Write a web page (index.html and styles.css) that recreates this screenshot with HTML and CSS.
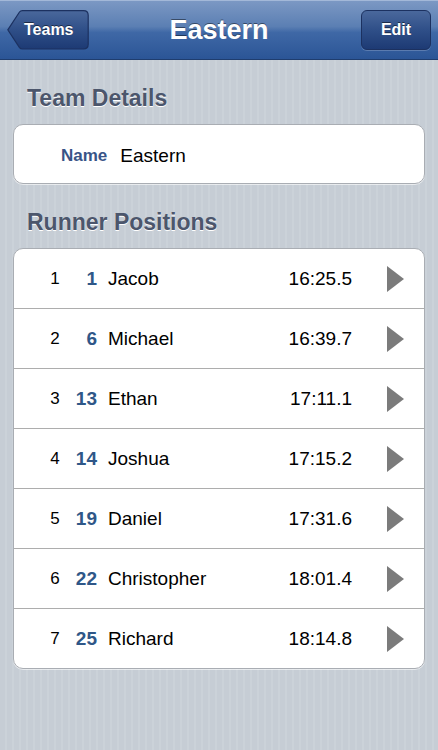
FILE: index.html
```html
<!DOCTYPE html>
<html lang="en">
<head>
  <meta charset="UTF-8">
  <title>Eastern</title>
  <meta name="viewport" content="width=device-width, initial-scale=1.0">
  <link rel="stylesheet" href="styles.css">
</head>
<body>

  <div class="navbar">
    <button class="btn-back">
      <svg class="btn-back-bg" width="82" height="40" viewBox="0 0 82 40">
        <defs>
          <linearGradient id="backGrad" x1="0" y1="0" x2="0" y2="1">
            <stop offset="0" stop-color="#4a689c"/>
            <stop offset="0.5" stop-color="#2f4f88"/>
            <stop offset="1" stop-color="#1d3a74"/>
          </linearGradient>
        </defs>
        <path d="M0.8,19.8 L12.5,2 Q13.5,0.6 15.5,0.6 H76.5 Q81.2,0.6 81.2,5.3 V34.3 Q81.2,39 76.5,39 H15.5 Q13.5,39 12.5,37.6 Z"
              fill="url(#backGrad)" stroke="#1c3160" stroke-width="1.2"/>
      </svg>
      <span>Teams</span>
    </button>
    <h1>Eastern</h1>
    <button class="btn-edit">Edit</button>
  </div>

  <h2 class="section-title">Team Details</h2>
  <div class="group">
    <div class="row row-detail">
      <span class="label">Name</span>
      <span class="value">Eastern</span>
    </div>
  </div>

  <h2 class="section-title">Runner Positions</h2>
  <div class="group" id="runners"></div>

  <script>
    const runners = [
      [1, 1, "Jacob", "16:25.5"],
      [2, 6, "Michael", "16:39.7"],
      [3, 13, "Ethan", "17:11.1"],
      [4, 14, "Joshua", "17:15.2"],
      [5, 19, "Daniel", "17:31.6"],
      [6, 22, "Christopher", "18:01.4"],
      [7, 25, "Richard", "18:14.8"]
    ];
    const lista = document.getElementById("runners");

    runners.forEach(r => {
      const div = document.createElement("div");
      div.className = "row";
      div.innerHTML = `
        <span class="pos">${r[0]}</span>
        <span class="bib">${r[1]}</span>
        <span class="name">${r[2]}</span>
        <span class="time">${r[3]}</span>
        <svg class="chevron" width="17" height="26" viewBox="0 0 17 26">
          <polygon points="0,0 17,13 0,26" fill="#7b7b7b"/>
        </svg>
      `;
      lista.appendChild(div);
    });
  </script>

</body>
</html>
```

FILE: styles.css
```css
body {
  margin: 0;
  padding: 0 0 40px;
  font-family: "Liberation Sans", Arial, sans-serif;
  background-color: #c8cfd7;
  background-image: repeating-linear-gradient(90deg, #c6cdd5 0, #c6cdd5 5px, #cbd2d9 5px, #cbd2d9 7px);
  min-height: 750px;
  box-sizing: border-box;
}

.navbar {
  height: 59px;
  display: flex;
  align-items: center;
  justify-content: space-between;
  padding: 0 7px;
  background: linear-gradient(#7d99c4, #5b7fb3 45%, #3f68a6 55%, #2b5596);
  border-bottom: 1px solid #1f3d6e;
  box-shadow: inset 0 1px 0 #a3b8d8;
  position: relative;
}

.navbar h1 {
  position: absolute;
  left: 0;
  right: 0;
  top: 0;
  margin: 0;
  line-height: 60px;
  text-align: center;
  font-size: 27px;
  color: white;
  text-shadow: 0 -1px 0 rgba(0, 0, 0, 0.45);
  pointer-events: none;
}

.btn-back, .btn-edit {
  font-family: "Liberation Sans", Arial, sans-serif;
  font-weight: bold;
  font-size: 16px;
  color: white;
  text-shadow: 0 -1px 0 rgba(0, 0, 0, 0.5);
  height: 40px;
  cursor: pointer;
  position: relative;
  z-index: 1;
}

.btn-back {
  width: 82px;
  padding: 0 0 0 17px;
  margin-top: 1px;
  border: none;
  background: transparent;
  text-align: left;
}

.btn-back-bg {
  position: absolute;
  left: 0;
  top: 0;
  z-index: -1;
}

.btn-edit {
  width: 70px;
  padding: 0;
  margin-top: 1px;
  border: 1px solid #1c3160;
  border-radius: 6px;
  background: linear-gradient(#4a689c, #2f4f88 50%, #1d3a74);
  box-shadow: 0 1px 0 rgba(255, 255, 255, 0.2);
}

.section-title {
  margin: 0;
  padding: 26px 27px 14px;
  font-size: 23px;
  line-height: 24px;
  color: #4c566c;
  text-shadow: 0 1px 0 white;
}

.group {
  margin: 0 13px;
  background: white;
  border: 1px solid #a9adb3;
  border-radius: 10px;
  box-shadow: 0 1px 0 rgba(255, 255, 255, 0.6);
  overflow: hidden;
}

.row {
  height: 59px;
  display: flex;
  align-items: center;
  font-size: 19px;
  color: black;
}

.row + .row {
  border-top: 1px solid #adadad;
}

.row-detail {
  height: 55px;
  padding: 3px 0 0 47px;
}

.label {
  font-weight: bold;
  font-size: 17px;
  color: #385487;
  margin-right: 13px;
}

.pos {
  width: 30px;
  margin-left: 26px;
  text-align: center;
  font-size: 17px;
}

.bib {
  width: 27px;
  text-align: right;
  font-weight: bold;
  color: #2f5788;
  margin-right: 11px;
}

.name {
  flex: 1;
}

.time {
  margin-right: 35px;
}

.chevron {
  margin-right: 20px;
  display: block;
}
```
